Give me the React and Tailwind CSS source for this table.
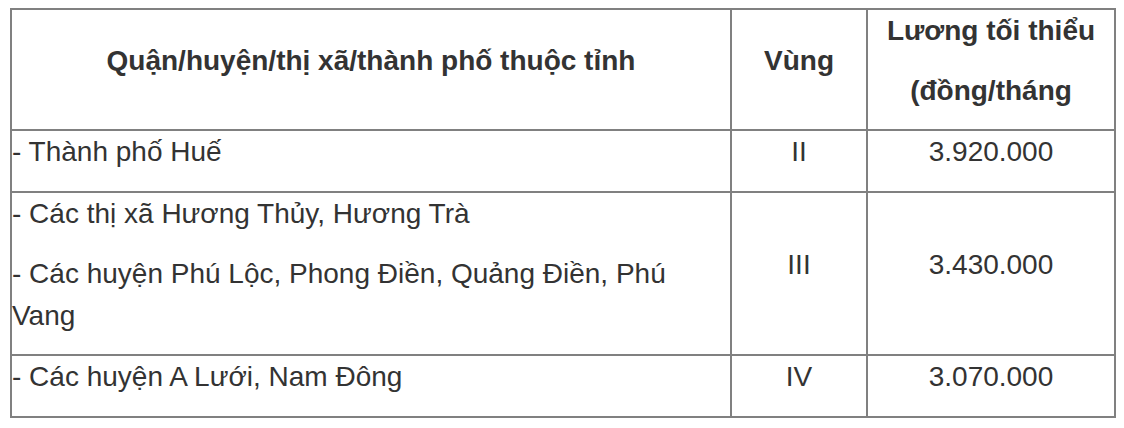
export default function App() {
  const cell = "flex flex-col justify-center";
  const p = "mb-[18px]";
  return (
    <div className="min-h-[428px] w-[1124px] bg-white pl-[10px] pt-[8px] font-['Liberation_Sans',Arial,Helvetica,sans-serif] text-[28px] leading-[42px] text-[#333333]">
      <div className="grid w-[1106px] grid-cols-[720px_136px_246px] border-2 border-[#808080]">
        {/* Header */}
        <div className={`${cell} h-[121px] border-r-2 border-b-2 border-[#808080] text-center font-bold`}>
          <p className={p}>Quận/huyện/thị xã/thành phố thuộc tỉnh</p>
        </div>
        <div className={`${cell} h-[121px] border-r-2 border-b-2 border-[#808080] text-center font-bold`}>
          <p className={p}>Vùng</p>
        </div>
        <div className={`${cell} h-[121px] border-b-2 border-[#808080] text-center font-bold`}>
          <p className={p}>Lương tối thiểu</p>
          <p className={p}>(đồng/tháng</p>
        </div>

        {/* Row 1 */}
        <div className={`${cell} h-[62px] border-r-2 border-b-2 border-[#808080] text-left`}>
          <p className={p}>- Thành phố Huế</p>
        </div>
        <div className={`${cell} h-[62px] border-r-2 border-b-2 border-[#808080] text-center`}>
          <p className={p}>II</p>
        </div>
        <div className={`${cell} h-[62px] border-b-2 border-[#808080] text-center`}>
          <p className={p}>3.920.000</p>
        </div>

        {/* Row 2 */}
        <div className={`${cell} h-[163px] border-r-2 border-b-2 border-[#808080] text-left`}>
          <p className={p}>- Các thị xã Hương Thủy, Hương Trà</p>
          <p className={p}>
            - Các huyện Phú Lộc, Phong Điền, Quảng Điền, Phú
            <br />
            Vang
          </p>
        </div>
        <div className={`${cell} h-[163px] border-r-2 border-b-2 border-[#808080] text-center`}>
          <p className={p}>III</p>
        </div>
        <div className={`${cell} h-[163px] border-b-2 border-[#808080] text-center`}>
          <p className={p}>3.430.000</p>
        </div>

        {/* Row 3 */}
        <div className={`${cell} h-[60px] border-r-2 border-[#808080] text-left`}>
          <p className={p}>- Các huyện A Lưới, Nam Đông</p>
        </div>
        <div className={`${cell} h-[60px] border-r-2 border-[#808080] text-center`}>
          <p className={p}>IV</p>
        </div>
        <div className={`${cell} h-[60px] text-center`}>
          <p className={p}>3.070.000</p>
        </div>
      </div>
    </div>
  );
}
